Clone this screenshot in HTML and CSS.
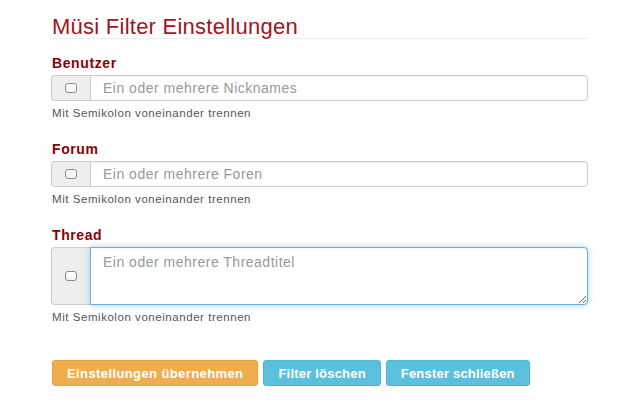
FILE: index.html
```html
<!DOCTYPE html>
<html lang="de">
<head>
<meta charset="utf-8">
<title>Müsi Filter Einstellungen</title>
<link rel="stylesheet" href="styles.css">
</head>
<body>
<div class="page">
  <h1 class="title">Müsi Filter Einstellungen</h1>

  <div class="group">
    <label class="label">Benutzer</label>
    <div class="input-group">
      <span class="addon"><input type="checkbox" class="check"></span>
      <input type="text" class="field" placeholder="Ein oder mehrere Nicknames">
    </div>
    <p class="help">Mit Semikolon voneinander trennen</p>
  </div>

  <div class="group">
    <label class="label">Forum</label>
    <div class="input-group">
      <span class="addon"><input type="checkbox" class="check"></span>
      <input type="text" class="field" placeholder="Ein oder mehrere Foren">
    </div>
    <p class="help">Mit Semikolon voneinander trennen</p>
  </div>

  <div class="group">
    <label class="label">Thread</label>
    <div class="input-group">
      <span class="addon"><input type="checkbox" class="check"></span>
      <textarea class="field area focused" placeholder="Ein oder mehrere Threadtitel"></textarea>
    </div>
    <p class="help">Mit Semikolon voneinander trennen</p>
  </div>

  <div class="actions">
    <button class="btn btn-warning">Einstellungen übernehmen</button>
    <button class="btn btn-info">Filter löschen</button>
    <button class="btn btn-info">Fenster schließen</button>
  </div>
</div>
</body>
</html>
```

FILE: styles.css
```css
html, body {
  margin: 0;
  padding: 0;
  background: #fff;
}
body {
  font-family: "Liberation Sans", Arial, Helvetica, sans-serif;
  color: #333;
}
.page {
  width: 537px;
  margin-left: 51px;
}
.title {
  margin: 15px 0 0;
  font-size: 22px;
  line-height: 23px;
  letter-spacing: 0.25px;
  font-weight: normal;
  color: #a01420;
  padding-left: 1px;
  border-bottom: 1px solid #eee;
}
.group {
  margin-top: 16px;
}
.group + .group {
  margin-top: 21px;
}
.label {
  display: block;
  font-size: 14px;
  line-height: 16px;
  letter-spacing: 0.6px;
  font-weight: bold;
  color: #8b0000;
  padding-left: 1px;
  margin-bottom: 4px;
}
.input-group {
  display: flex;
  align-items: stretch;
}
.addon {
  width: 38px;
  flex: none;
  display: flex;
  align-items: center;
  justify-content: center;
  background: #eee;
  border: 1px solid #ccc;
  border-right: 0;
  border-radius: 4px 0 0 4px;
}
.check {
  -webkit-appearance: none;
  appearance: none;
  margin: 0;
  width: 12px;
  height: 10px;
  border: 1px solid #8e8e8e;
  border-radius: 3px;
  background: linear-gradient(#fff, #f2f2f2);
  box-sizing: border-box;
}
.field {
  flex: 1;
  min-width: 0;
  height: 26px;
  box-sizing: border-box;
  border: 1px solid #ccc;
  border-radius: 0 4px 4px 0;
  padding: 0 12px;
  font-family: "Liberation Sans", Arial, Helvetica, sans-serif;
  font-size: 14px;
  letter-spacing: 0.5px;
  color: #555;
  background: #fff;
  outline: none;
  box-shadow: inset 0 1px 1px rgba(0,0,0,.05);
}
.field::placeholder {
  color: #999;
}
.area {
  height: 58px;
  padding: 6px 12px;
  line-height: 17px;
  resize: vertical;
}
.area.focused {
  border-color: #66afe9;
  box-shadow: inset 0 1px 1px rgba(0,0,0,.05), 0 0 6px rgba(102,175,233,.6);
}
.help {
  margin: 5px 0 0;
  font-size: 11.5px;
  line-height: 14px;
  letter-spacing: 0.55px;
  color: #555;
  padding-left: 1px;
}
.actions {
  margin-top: 36px;
  display: flex;
  gap: 5px;
  padding-left: 1px;
}
.btn {
  height: 26px;
  padding: 0 14px;
  border: 1px solid transparent;
  border-radius: 3px;
  font-family: "Liberation Sans", Arial, Helvetica, sans-serif;
  font-size: 13px;
  letter-spacing: 0.4px;
  font-weight: bold;
  color: #fff;
  cursor: pointer;
}
.btn-warning {
  background: #f0ad4e;
  border-color: #eea236;
}
.btn-info {
  background: #5bc0de;
  border-color: #46b8da;
  letter-spacing: 0.2px;
}
```
